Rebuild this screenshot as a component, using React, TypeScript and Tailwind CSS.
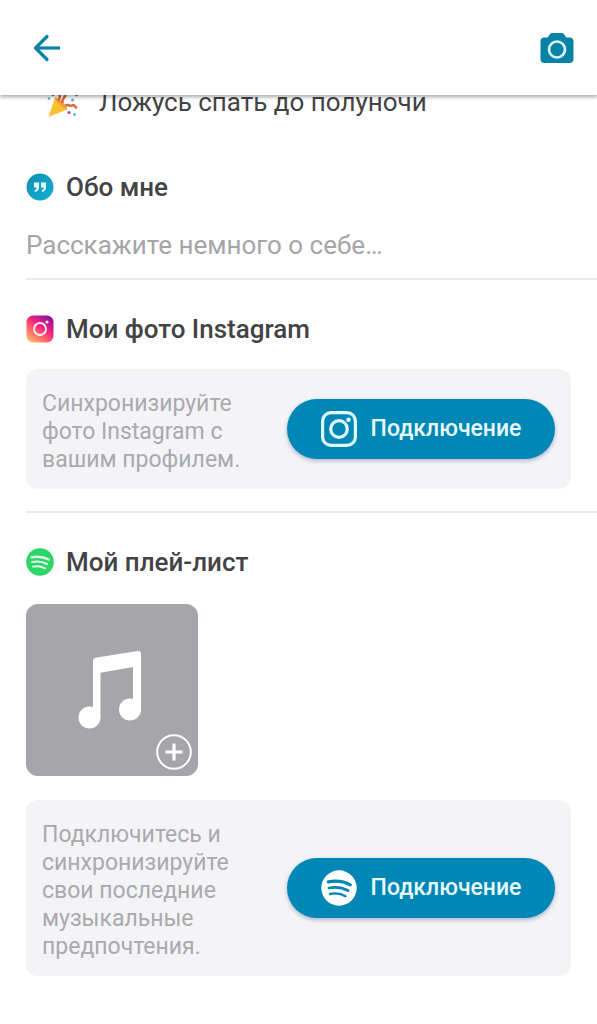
import React, { useState } from 'react';

interface SectionTitleProps {
  icon: React.ReactNode;
  children: React.ReactNode;
}

interface ConnectCardProps {
  text: string;
  icon: React.ReactNode;
}

const BackIcon = () => (
  <svg className="w-8 h-8" viewBox="0 0 32 32" fill="none" stroke="#0883a8" strokeWidth="3.2" aria-hidden="true">
    <path d="M17 4.5 5.500 16 17 27.500" strokeLinecap="round" strokeLinejoin="round" />
    <path d="M6 16H30" />
  </svg>
);

const CameraIcon = () => (
  <svg className="w-[34px] h-[30px]" viewBox="0 0 34 30" aria-hidden="true">
    <path
      d="M12.500 0h9c1.400 0 2.200.6 3 1.800L26.300 4.500H29.500a4 4 0 0 1 4 4V26a4 4 0 0 1-4 4h-25a4 4 0 0 1-4-4V8.500a4 4 0 0 1 4-4H7.700L9.500 1.800C10.300.6 11.100 0 12.500 0Z"
      fill="#0883a8"
    />
    <circle cx="17" cy="16.500" r="8" fill="none" stroke="#dff8ff" strokeWidth="2.600" />
  </svg>
);

const PartyIcon = () => (
  <svg className="w-8 h-8" viewBox="0 0 32 32" fill="none" aria-hidden="true">
    <path d="M1.500 31 8 11.500c4 1 11 8 12 12Z" fill="#fbc02d" />
    <path d="M8 11.500c4 0 12 7 12 12-4-1-11-7.500-12-12Z" fill="#f0a33a" />
    <path d="M11 15c3-3 2-7-1-10M15.500 17c-1-4 2-5 3-8s3-5 7-5M18.500 20c3-3 4 1 6.500-.5s3 2 5 2.500" stroke="#d9683e" strokeWidth="2.600" />
    <g fill="#58b5e0">
      <circle cx="2" cy="12.500" r="1.300" />
      <circle cx="25.500" cy="14" r="1.600" />
      <circle cx="27.500" cy="28.500" r="1.500" />
    </g>
    <g fill="#c2456b">
      <circle cx="6" cy="9" r="1.200" />
      <circle cx="29.500" cy="9" r="1.400" />
      <circle cx="22" cy="26.500" r="1.600" />
    </g>
  </svg>
);

const QuoteIcon = () => (
  <svg className="w-7 h-7" viewBox="0 0 28 28" aria-hidden="true">
    <defs>
      <linearGradient id="quote-fill" x1="0" y1="0" x2="1" y2="1">
        <stop offset="0" stopColor="#138db4" />
        <stop offset="1" stopColor="#0fb2d2" />
      </linearGradient>
    </defs>
    <circle cx="14" cy="14" r="13.500" fill="url(#quote-fill)" />
    <path
      d="M8 9.500h5v4.500c0 3-1.500 4.700-4.200 5v-2c1.300-.3 1.900-1.100 1.900-2.500H8ZM15 9.500H20v4.500c0 3-1.500 4.700-4.200 5v-2c1.300-.3 1.900-1.100 1.900-2.500h-2.700Z"
      fill="#e9fbff"
    />
  </svg>
);

const InstagramBadge = () => (
  <svg className="w-7 h-7" viewBox="0 0 28 28" aria-hidden="true">
    <defs>
      <linearGradient id="insta-fill" x1="0.100" y1="1" x2="0.800" y2="0">
        <stop offset="0" stopColor="#ffc06a" />
        <stop offset="0.300" stopColor="#ff7568" />
        <stop offset="0.600" stopColor="#f5277d" />
        <stop offset="1" stopColor="#8a0fa5" />
      </linearGradient>
    </defs>
    <rect x="0.500" y="0.500" width="27" height="27" rx="6.500" fill="url(#insta-fill)" />
    <circle cx="14" cy="14" r="6" fill="none" stroke="#ffe6ef" strokeWidth="1.900" />
    <circle cx="21" cy="7" r="1.600" fill="#ffe6ef" />
  </svg>
);

const InstagramIcon = () => (
  <svg className="w-9 h-9" viewBox="0 0 36 36" fill="none" stroke="#e0f9ff" aria-hidden="true">
    <rect x="1.600" y="1.600" width="32.800" height="32.800" rx="8.500" strokeWidth="3.200" />
    <circle cx="18" cy="18" r="8.300" strokeWidth="3.200" />
    <circle cx="27.500" cy="8.700" r="2.300" fill="#e0f9ff" stroke="none" />
  </svg>
);

const SpotifyIcon = ({ className, fill, wave }: { className: string; fill: string; wave: string }) => (
  <svg className={className} viewBox="0 0 36 36" fill="none" aria-hidden="true">
    <circle cx="18" cy="18" r="17.700" fill={fill} />
    <g stroke={wave} strokeLinecap="round">
      <path d="M7.300 11.800c8-1.300 15.500-.5 22 3" strokeWidth="3.200" />
      <path d="M8 18c6.500-1.300 13.500-.4 19 2.600" strokeWidth="2.800" />
      <path d="M9 24c5.500-1.200 11-.5 15.500 2.200" strokeWidth="2.400" />
    </g>
  </svg>
);

const MusicTileIcon = () => (
  <svg className="w-full h-full" viewBox="0 0 172 172" fill="none" aria-hidden="true">
    <path
      d="M67 113V56.500Q67 54.300 69.500 53.800L111.500 47Q115 46.500 115 49.500V106H107V63L74.500 68.800V113Z"
      fill="#fff"
    />
    <circle cx="63.500" cy="113.500" r="11" fill="#fff" />
    <circle cx="104" cy="105.500" r="11" fill="#fff" />
    <circle cx="148" cy="148" r="16.800" stroke="#fff" strokeWidth="2" />
    <path d="M148 139.500v17M139.500 148h17" stroke="#fff" strokeWidth="3.200" />
  </svg>
);

const SectionTitle: React.FC<SectionTitleProps> = ({ icon, children }) => (
  <h2 className="flex items-center gap-3 text-[26px] leading-8 font-medium text-[#434346]">
    {icon}
    <span>{children}</span>
  </h2>
);

const ConnectCard: React.FC<ConnectCardProps> = ({ text, icon }) => (
  <div className="flex items-center justify-between gap-4 rounded-xl bg-[#f4f4f7] px-4 py-[15px]">
    <p className="min-w-0 flex-1 pt-1.5 text-[23px] leading-7 text-[#a9a9ae]">{text}</p>
    <button
      type="button"
      className="flex h-[60px] w-[268px] shrink-0 items-center justify-center gap-3.5 rounded-full bg-[#0087b5] text-[23px] leading-7 font-medium text-[#e6faff] shadow-[0_2px_4px_rgba(40,70,130,0.35)]"
    >
      {icon}
      <span>Подключение</span>
    </button>
  </div>
);

const App: React.FC = () => {
  const [about, setAbout] = useState('');

  return (
    <div className="min-h-screen bg-white font-['Roboto',sans-serif]">
      <header className="sticky top-0 z-10 flex h-[95px] items-center justify-between bg-white pl-[30px] pr-[23px] shadow-[0_2px_4px_rgba(0,0,0,0.35)]">
        <button type="button" aria-label="Назад">
          <BackIcon />
        </button>
        <button type="button" aria-label="Добавить фото">
          <CameraIcon />
        </button>
      </header>

      <main className="pl-[26px] pb-12">
        {/* Last answer of the list, partly under the header */}
        <div className="-mt-[9px] flex items-center gap-5 pl-[21px] text-[26px] leading-8 text-[#434346]">
          <PartyIcon />
          <span>Ложусь спать до полуночи</span>
        </div>

        {/* About */}
        <section className="border-b-2 border-[#ebebed] pt-[53px] pb-[17px]">
          <SectionTitle icon={<QuoteIcon />}>Обо мне</SectionTitle>
          <input
            type="text"
            aria-label="Обо мне"
            placeholder="Расскажите немного о себе…"
            value={about}
            onChange={(e) => setAbout(e.target.value)}
            className="mt-[26px] block h-8 w-full text-[26px] leading-8 text-[#434346] outline-none placeholder:text-[#a5a5a9]"
          />
        </section>

        {/* Instagram */}
        <section className="border-b-2 border-[#ebebed] pt-[33px] pr-[26px] pb-[22px]">
          <SectionTitle icon={<InstagramBadge />}>Мои фото Instagram</SectionTitle>
          <div className="mt-6">
            <ConnectCard text="Синхронизируйте фото Instagram с вашим профилем." icon={<InstagramIcon />} />
          </div>
        </section>

        {/* Playlist */}
        <section className="pt-[33px] pr-[26px]">
          <SectionTitle icon={<SpotifyIcon className="w-7 h-7" fill="#2bd566" wave="#e4ffed" />}>
            Мой плей-лист
          </SectionTitle>
          <button
            type="button"
            aria-label="Добавить музыку"
            className="mt-[26px] block size-[172px] rounded-xl bg-[#a6a5aa]"
          >
            <MusicTileIcon />
          </button>
          <div className="mt-6">
            <ConnectCard
              text="Подключитесь и синхронизируйте свои последние музыкальные предпочтения."
              icon={<SpotifyIcon className="w-9 h-9" fill="#ffffff" wave="#0087b5" />}
            />
          </div>
        </section>
      </main>
    </div>
  );
};

export default App;
